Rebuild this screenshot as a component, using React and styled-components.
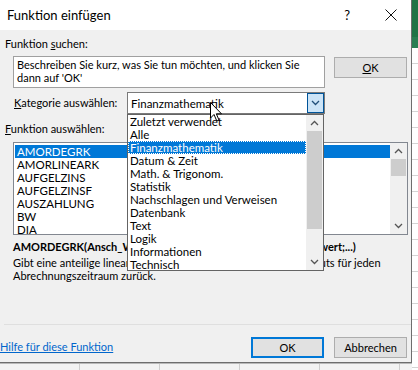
import React from "react";
import styled, { createGlobalStyle } from "styled-components";

const categories = [
  "Zuletzt verwendet",
  "Alle",
  "Finanzmathematik",
  "Datum & Zeit",
  "Math. & Trigonom.",
  "Statistik",
  "Nachschlagen und Verweisen",
  "Datenbank",
  "Text",
  "Logik",
  "Informationen",
  "Technisch",
];

const functions = [
  "AMORDEGRK",
  "AMORLINEARK",
  "AUFGELZINS",
  "AUFGELZINSF",
  "AUSZAHLUNG",
  "BW",
  "DIA",
];

function Chevron({ up, color = "#333" }) {
  return (
    <svg width="9" height="6" viewBox="0 0 9 6">
      <path
        d={up ? "M1 5 L4.5 1.5 L8 5" : "M1 1 L4.5 4.5 L8 1"}
        fill="none"
        stroke={color}
        strokeWidth="1.3"
      />
    </svg>
  );
}

function Cursor() {
  return (
    <svg width="14" height="21" viewBox="0 0 14 21">
      <path
        d="M0.5 0.5 L0.5 16 L4 12.5 L6.8 19 L9 18 L6.3 11.8 L11.5 11.8 Z"
        fill="#fff"
        stroke="#000"
        strokeWidth="1"
        strokeLinejoin="round"
      />
    </svg>
  );
}

export default function App() {
  return (
    <>
      <GlobalStyle />
      <Page>
        <Dialog>
          <TitleBar>
            <Title>Funktion einfügen</Title>
            <TitleIcons>
              <Help>?</Help>
              <svg width="12" height="12" viewBox="0 0 12 12">
                <path d="M0.5 0.5 L11.5 11.5 M11.5 0.5 L0.5 11.5" stroke="#111" strokeWidth="1" />
              </svg>
            </TitleIcons>
          </TitleBar>

          <Body>
            <Label>
              Funktion <u>s</u>uchen:
            </Label>
            <SearchRow>
              <SearchBox>
                Beschreiben Sie kurz, was Sie tun möchten, und klicken Sie
                <br />
                dann auf 'OK'
              </SearchBox>
              <Button $top={1}>
                <u>O</u>K
              </Button>
            </SearchRow>

            <CategoryRow>
              <Label as="span">
                <u>K</u>ategorie auswählen:
              </Label>
              <Select>
                <SelectValue>Finanzmathematik</SelectValue>
                <SelectArrow>
                  <Chevron color="#1f4e79" />
                </SelectArrow>
              </Select>
            </CategoryRow>

            <Label $top={7} $left={-8}>
              <u>F</u>unktion auswählen:
            </Label>
            <ListBox>
              <Items>
                {functions.map((f, i) => (
                  <Item key={f} $selected={i === 0}>
                    {f}
                  </Item>
                ))}
              </Items>
              <ScrollBar>
                <ScrollArrow>
                  <Chevron up color="#555" />
                </ScrollArrow>
                <Thumb $height={17} />
                <Track />
                <ScrollArrow>
                  <Chevron color="#555" />
                </ScrollArrow>
              </ScrollBar>
            </ListBox>

            <Signature>AMORDEGRK(Ansch_Wert;Kaufdatum;Erster_Zinstermin;Restwert;...)</Signature>
            <Description>
              Gibt eine anteilige lineare Abschreibungsrate eines Wirtschaftsguts für jeden
              <br />
              Abrechnungszeitraum zurück.
            </Description>
          </Body>

          <Footer>
            <HelpLink>Hilfe für diese Funktion</HelpLink>
            <Buttons>
              <Button $primary>OK</Button>
              <Button>Abbrechen</Button>
            </Buttons>
          </Footer>

          <Dropdown>
            <DropItems>
              {categories.map((c) => (
                <DropItem key={c} $selected={c === "Finanzmathematik"}>
                  {c}
                </DropItem>
              ))}
            </DropItems>
            <ScrollBar>
              <ScrollArrow>
                <Chevron up color="#555" />
              </ScrollArrow>
              <Thumb $height={98} />
              <Track />
              <ScrollArrow>
                <Chevron color="#555" />
              </ScrollArrow>
            </ScrollBar>
          </Dropdown>

          <Pointer>
            <Cursor />
          </Pointer>
        </Dialog>

        <ExcelRight>
          <Ribbon />
          <Cells />
        </ExcelRight>
        <ExcelBottom />
      </Page>
    </>
  );
}

const GlobalStyle = createGlobalStyle`
  body {
    margin: 0;
    background: #fff;
    font-family: Lato, "Noto Sans", sans-serif;
    font-size: 11px;
    color: #000;
  }
`;

const Page = styled.div`
  width: 418px;
  height: 370px;
  overflow: hidden;
  display: grid;
  grid-template-columns: 412px 6px;
  grid-template-rows: 363px 7px;
  background: #fff;
`;

const Dialog = styled.div`
  grid-column: 1;
  grid-row: 1;
  position: relative;
  display: flex;
  flex-direction: column;
  background: #f0f0f0;
  border-right: 1px solid #6e6e6e;
  border-bottom: 1px solid #6e6e6e;
`;

const TitleBar = styled.div`
  height: 30px;
  flex-shrink: 0;
  display: flex;
  align-items: center;
  justify-content: space-between;
  padding-left: 7px;
  background: #fff;
`;

const Title = styled.span`
  font-size: 13px;
`;

const TitleIcons = styled.div`
  display: flex;
  align-items: center;
  gap: 35px;
  padding-right: 14px;
`;

const Help = styled.span`
  font-size: 13px;
`;

const Body = styled.div`
  display: flex;
  flex-direction: column;
  padding: 0 0 0 13px;
`;

const Label = styled.div`
  line-height: 16px;
  margin-top: ${(p) => p.$top ?? 6}px;
  margin-left: ${(p) => p.$left ?? -8}px;
  white-space: nowrap;
`;

const SearchRow = styled.div`
  display: flex;
  align-items: flex-start;
  gap: 9px;
  margin-top: 4px;
`;

const SearchBox = styled.div`
  width: 312px;
  height: 32px;
  box-sizing: border-box;
  border: 1px solid #a0a0a0;
  background: #fff;
  padding: 1px 3px 0;
  line-height: 13px;
  white-space: nowrap;
`;

const Button = styled.div`
  width: 73px;
  height: 21px;
  box-sizing: border-box;
  margin-top: ${(p) => p.$top ?? 0}px;
  display: flex;
  align-items: center;
  justify-content: center;
  background: #e1e1e1;
  border: ${(p) => (p.$primary ? "2px solid #0078d7" : "1px solid #adadad")};
`;

const CategoryRow = styled.div`
  display: flex;
  align-items: center;
  margin-top: 4px;
  height: 22px;

  & > span {
    margin: 0 0 0 1px;
    width: 113px;
  }
`;

const Select = styled.div`
  width: 198px;
  height: 22px;
  box-sizing: border-box;
  display: flex;
  align-items: center;
  justify-content: space-between;
  background: #fff;
  border: 1px solid #7a7a7a;
`;

const SelectValue = styled.span`
  padding-left: 3px;
  font-size: 11.5px;
`;

const SelectArrow = styled.div`
  width: 17px;
  height: 20px;
  box-sizing: border-box;
  display: flex;
  align-items: center;
  justify-content: center;
  background: #cce4f7;
  border: 1px solid #005499;
`;

const ListBox = styled.div`
  display: flex;
  width: 395px;
  height: 93px;
  box-sizing: border-box;
  margin-top: 5px;
  border: 1px solid #828790;
  background: #fff;
`;

const Items = styled.div`
  flex: 1;
  padding: 2px 0 0 1px;
`;

const Item = styled.div`
  height: 13px;
  line-height: 13px;
  padding-left: 2px;
  font-size: 11.5px;
  background: ${(p) => (p.$selected ? "#0078d7" : "transparent")};
  color: ${(p) => (p.$selected ? "#fff" : "#000")};
`;

const ScrollBar = styled.div`
  width: 17px;
  display: flex;
  flex-direction: column;
  background: #f0f0f0;
`;

const ScrollArrow = styled.div`
  height: 16px;
  flex-shrink: 0;
  display: flex;
  align-items: center;
  justify-content: center;
`;

const Thumb = styled.div`
  height: ${(p) => p.$height}px;
  margin: 0 1px;
  background: #cdcdcd;
`;

const Track = styled.div`
  flex: 1;
`;

const Signature = styled.div`
  margin-top: 5px;
  font-weight: bold;
  line-height: 13px;
  white-space: nowrap;
`;

const Description = styled.div`
  margin-top: 3px;
  line-height: 13px;
  white-space: nowrap;
`;

const Footer = styled.div`
  margin-top: auto;
  margin-left: 4px;
  height: 38px;
  box-sizing: border-box;
  border-top: 1px solid #dfdfdf;
  display: flex;
  align-items: flex-start;
  justify-content: space-between;
  padding: 12px 4px 0 0;
`;

const HelpLink = styled.a`
  color: #0066cc;
  text-decoration: underline;
  line-height: 19px;
  margin-left: -4px;
`;

const Buttons = styled.div`
  display: flex;
  gap: 10px;
`;

const Dropdown = styled.div`
  position: absolute;
  left: 127px;
  top: 114px;
  width: 197px;
  height: 157px;
  box-sizing: border-box;
  display: flex;
  background: #fff;
  border: 1px solid #646464;
`;

const DropItems = styled.div`
  flex: 1;
`;

const DropItem = styled.div`
  height: 13px;
  line-height: 13px;
  padding-left: 2px;
  font-size: 11.5px;
  white-space: nowrap;
  box-sizing: border-box;
  background: ${(p) => (p.$selected ? "#0078d7" : "transparent")};
  color: ${(p) => (p.$selected ? "#fff" : "#000")};
  outline: ${(p) => (p.$selected ? "1px dotted #fff" : "none")};
  outline-offset: -1px;
`;

const Pointer = styled.div`
  position: absolute;
  left: 210px;
  top: 102px;
`;

const ExcelRight = styled.div`
  grid-column: 2;
  grid-row: 1 / 3;
  display: flex;
  flex-direction: column;
`;

const Ribbon = styled.div`
  height: 48px;
  flex-shrink: 0;
  background: #217346;
  box-shadow: inset 0 -11px 0 #2b7d52;
`;

const Cells = styled.div`
  flex: 1;
  background: repeating-linear-gradient(
    to bottom,
    #fff 0,
    #fff 15px,
    #d4d4d4 15px,
    #d4d4d4 16px
  );
`;

const ExcelBottom = styled.div`
  grid-column: 1;
  grid-row: 2;
  background: repeating-linear-gradient(
    to right,
    #f3f3f3 0,
    #f3f3f3 79px,
    #cfcfcf 79px,
    #cfcfcf 80px
  );
  box-shadow: inset 0 1px 0 #b9b9b9;
`;
